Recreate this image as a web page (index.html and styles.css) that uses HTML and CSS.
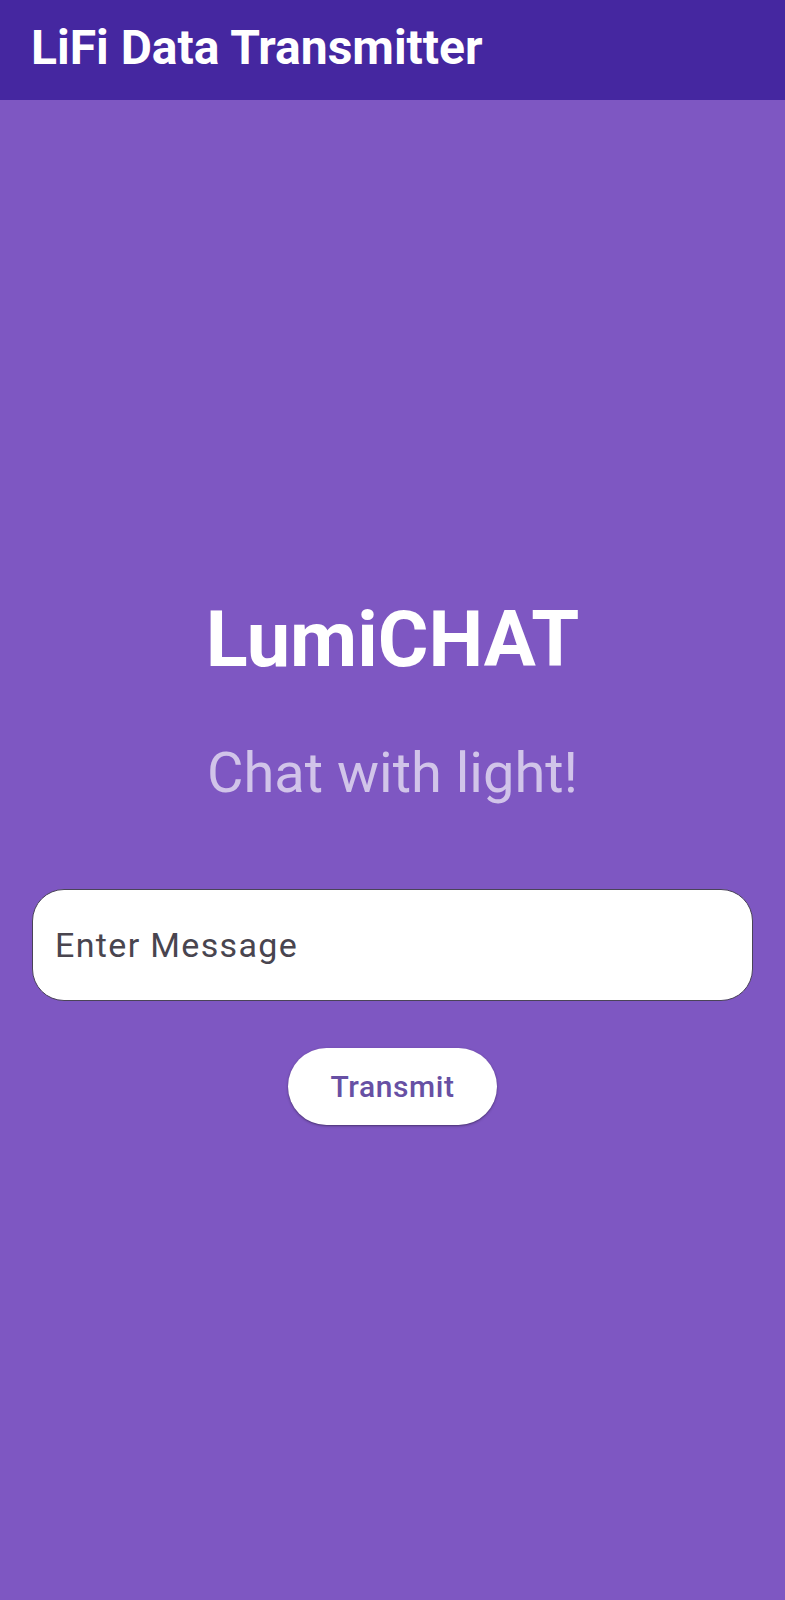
FILE: index.html
```html
<!DOCTYPE html>
<html lang="en">
<head>
<meta charset="utf-8">
<title>LiFi Data Transmitter</title>
<link rel="stylesheet" href="styles.css">
</head>
<body>
<header class="app-bar">
  <h1 class="app-title">LiFi Data Transmitter</h1>
</header>
<main class="content">
  <h2 class="brand">LumiCHAT</h2>
  <p class="tagline">Chat with light!</p>
  <input class="message-input" type="text" placeholder="Enter Message">
  <button class="transmit-btn" type="button">Transmit</button>
</main>
</body>
</html>
```

FILE: styles.css
```css
html, body {
  margin: 0;
  padding: 0;
}
body {
  background: #7e57c2;
  font-family: Roboto, "Noto Sans", "Liberation Sans", sans-serif;
  min-height: 1600px;
}
.app-bar {
  box-sizing: border-box;
  height: 100px;
  background: #4527a0;
  padding: 24px 0 0 31px;
}
.app-title {
  margin: 0;
  font-size: 48px;
  line-height: 48px;
  font-weight: 700;
  color: #ffffff;
  letter-spacing: 0;
}
.content {
  display: flex;
  flex-direction: column;
  align-items: center;
  padding: 501px 32px 0;
}
.brand {
  margin: 0;
  font-size: 77.5px;
  line-height: 78px;
  font-weight: 700;
  color: #ffffff;
}
.tagline {
  margin: 66px 0 0;
  font-size: 56px;
  line-height: 56px;
  font-weight: 400;
  color: #d1c4e9;
}
.message-input {
  box-sizing: border-box;
  margin-top: 88px;
  width: 100%;
  height: 112px;
  border: 1.5px solid #4a4458;
  border-radius: 32px;
  background: #ffffff;
  padding: 0 0 0 22px;
  font-family: inherit;
  font-size: 34px;
  letter-spacing: 1.35px;
  color: #1d1b20;
  outline: none;
}
.message-input::placeholder {
  color: #49454f;
  opacity: 1;
}
.transmit-btn {
  margin-top: 47px;
  width: 209px;
  height: 77px;
  border: none;
  border-radius: 39px;
  background: #ffffff;
  box-shadow: 0 1px 3px rgba(0, 0, 0, 0.3), 0 1px 1px rgba(0, 0, 0, 0.15);
  font-family: inherit;
  font-size: 30px;
  font-weight: 500;
  letter-spacing: 0.6px;
  color: #6750a4;
  padding: 0;
}
```
